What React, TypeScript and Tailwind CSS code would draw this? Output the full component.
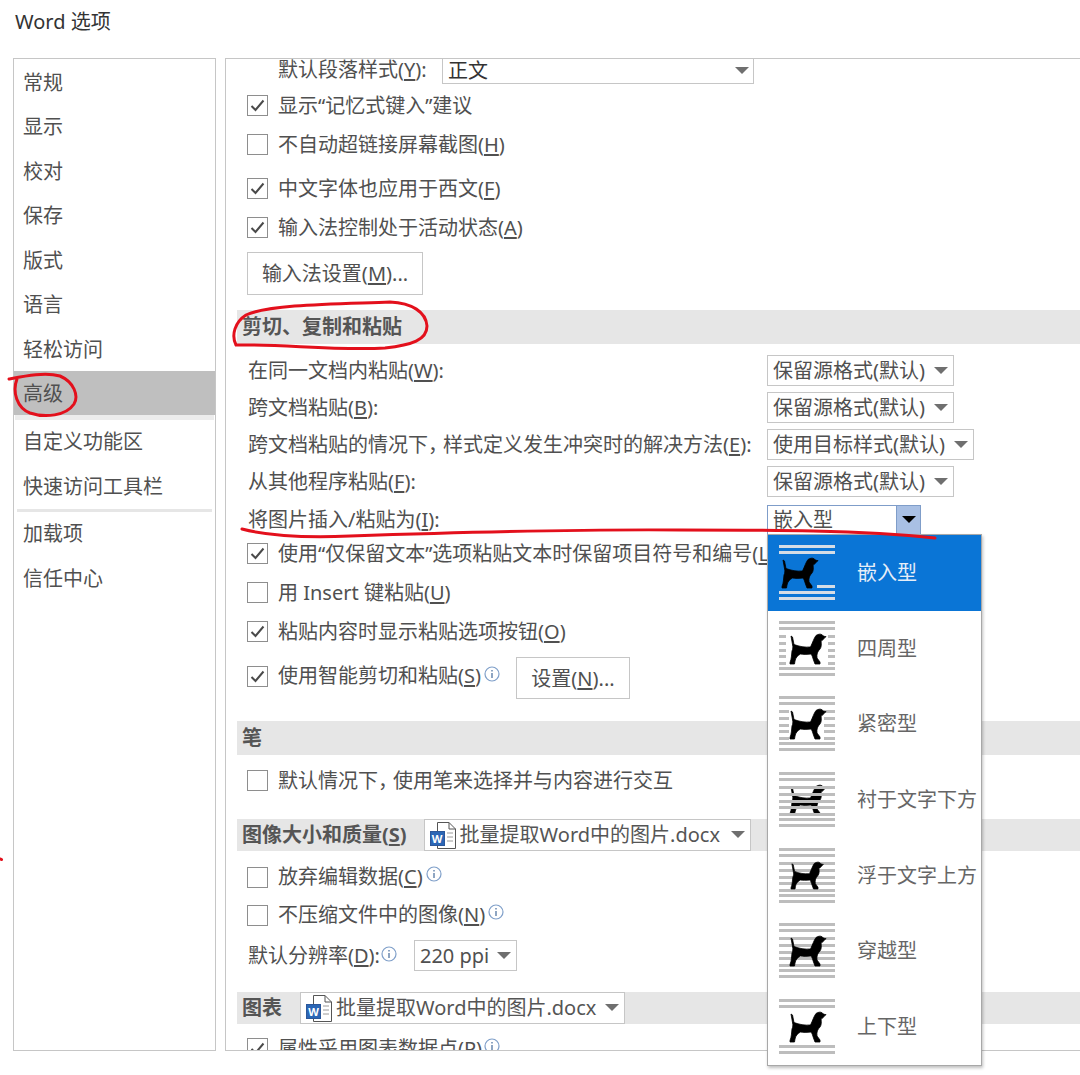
import type { ReactNode } from "react";

const navTop = ["常规", "显示", "校对", "保存", "版式", "语言", "轻松访问"];

// traced from the wrap-style thumbnails, 36x30 box
const DOG =
  "M1 2 L2.5 3 L4 10.5 C9 12.5 15 13.5 20.5 13 C22.5 9 24 4 26 1.5 C28 0 31 -0.3 32 0.8 C33 2 34.5 2.6 36 2.6 L34 4.6 C33 6 32 6.6 31 7 C31.5 10 31.5 13 30 15 C27.5 17.5 26.5 20 27 24 L30 28 L30 30 L25 30 L23.5 26 C22.5 23 22 21 21 20 C17 20.5 13 20.5 10.5 20 C7.5 21.5 5.5 24 5 27 L4.5 30 L0 30 L0 28.5 C1.5 25 1.5 21 2 17 C3 15 3 13 2.6 11 Z";

type Wrap = "inline" | "square" | "tight" | "behind" | "front" | "through" | "topbottom";

const menuItems: { wrap: Wrap; label: string }[] = [
  { wrap: "inline", label: "嵌入型" },
  { wrap: "square", label: "四周型" },
  { wrap: "tight", label: "紧密型" },
  { wrap: "behind", label: "衬于文字下方" },
  { wrap: "front", label: "浮于文字上方" },
  { wrap: "through", label: "穿越型" },
  { wrap: "topbottom", label: "上下型" },
];

function WrapIcon({ wrap, active }: { wrap: Wrap; active?: boolean }) {
  const line = active ? "#d5dde6" : "#bdbdbd";
  const mid = [14, 21, 28, 34, 41];
  const bars: [number, number, number][] = [
    [0, 0, 56],
    [0, 6, 56],
    [0, 46, 56],
    [0, 52, 56],
  ];
  if (wrap === "inline") bars.push([38, 40, 18]);
  if (wrap === "square") mid.forEach((y) => bars.push([0, y, 7], [49, y, 7]));
  if (wrap === "tight") mid.forEach((y) => bars.push([0, y, 10], [45, y, 11]));
  if (wrap === "behind" || wrap === "front" || wrap === "through") mid.forEach((y) => bars.push([0, y, 56]));

  const dogX = wrap === "inline" ? 3 : wrap === "front" ? 12 : 11;
  const dogY = wrap === "front" ? 14 : 13;
  const scale = wrap === "front" ? 0.9 : 1;
  const dog = <path d={DOG} transform={`translate(${dogX} ${dogY}) scale(${scale})`} fill="#000" stroke="#000" strokeWidth="0.8" />;
  const lines = bars.map(([x, y, w]) => <rect key={`${x}-${y}`} x={x} y={y} width={w} height="3" fill={line} />);

  return (
    <svg width="56" height="56" viewBox="0 0 56 56" className="shrink-0">
      {wrap !== "behind" && lines}
      {dog}
      {wrap === "behind" && lines}
    </svg>
  );
}

function Caret({ dark }: { dark?: boolean }) {
  return (
    <svg width="14" height="8" viewBox="0 0 14 8" className="shrink-0">
      <path d="M0 0 H14 L7 7 Z" fill={dark ? "#000" : "#6f6f6f"} />
    </svg>
  );
}

function Check({ checked }: { checked?: boolean }) {
  return (
    <span className="flex h-[21px] w-[21px] shrink-0 items-center justify-center border border-[#8e8e8e] bg-white">
      {checked && (
        <svg width="15" height="13" viewBox="0 0 15 13">
          <path d="M1.5 7 L5.5 11 L13.5 1.5" fill="none" stroke="#4a4a4a" strokeWidth="2" />
        </svg>
      )}
    </span>
  );
}

function Info() {
  return (
    <svg width="16" height="16" viewBox="0 0 16 16" className="shrink-0">
      <circle cx="8" cy="8" r="7" fill="none" stroke="#7f9fc9" strokeWidth="1.2" />
      <rect x="7.3" y="7" width="1.4" height="5" fill="#5f7fa9" />
      <rect x="7.3" y="4" width="1.4" height="1.5" fill="#5f7fa9" />
    </svg>
  );
}

function Comma() {
  return <span className="tracking-[-5px]">，</span>;
}

function CheckRow({ checked, height = "h-[39px]", className, children }: { checked?: boolean; height?: string; className?: string; children: ReactNode }) {
  return (
    <div className={`flex items-center gap-[10px] pl-[21px] ${height} ${className ?? ""}`}>
      <Check checked={checked} />
      <span className="whitespace-nowrap">{children}</span>
    </div>
  );
}

function Select({ height = "h-[31px]", className, children }: { height?: string; className?: string; children: ReactNode }) {
  return (
    <div className={`flex items-center justify-between border border-[#c6c6c6] bg-white pl-[5px] pr-[5px] ${height} ${className ?? ""}`}>
      <span className="flex items-center whitespace-nowrap">{children}</span>
      <Caret />
    </div>
  );
}

function PasteRow({ label, accel, value, width }: { label: ReactNode; accel: string; value: string; width: string }) {
  return (
    <div className="flex h-[37px] items-center pl-[22px]">
      <span className="w-[519px] shrink-0 whitespace-nowrap">
        {label}(<u className="underline-offset-2">{accel}</u>):
      </span>
      <Select className={width}>{value}</Select>
    </div>
  );
}

function Section({ className, children }: { className?: string; children: ReactNode }) {
  return (
    <div className={`ml-[11px] flex items-center bg-[#e6e6e6] pl-[5px] font-bold text-[#555] ${className ?? ""}`}>{children}</div>
  );
}

function DocIcon() {
  return (
    <span className="relative mr-[4px] h-[27px] w-[26px] shrink-0">
      <svg width="26" height="27" viewBox="0 0 26 27" className="absolute left-0 top-0">
        <path d="M7.5 .5 H19 L25.5 7 V26.5 H7.5 Z M19 .5 V7 H25.5" fill="#fff" stroke="#555" />
        <path d="M17 11 H23 M17 15 H23 M17 19 H23" stroke="#9a9a9a" />
      </svg>
      <span className="absolute bottom-[3px] left-0 flex h-[15px] w-[15px] items-center justify-center border border-[#2b579a] bg-[#2b66b5] text-[11px] font-bold leading-none text-white">
        W
      </span>
    </span>
  );
}

export default function App() {
  return (
    <div className="relative h-[1075px] w-[1080px] overflow-hidden bg-white font-['Noto_Sans','Noto_Sans_CJK_SC',sans-serif] text-[20px] leading-[26px] text-[#505050]">
      <div className="flex h-[58px] items-start pl-[15px] pt-[9px] text-[#333]">Word 选项</div>

      <div className="flex h-[993px] gap-[9px] pl-[13px]">
        {/* category list */}
        <nav className="w-[203px] shrink-0 border border-[#c6c6c6]">
          <div className="h-[1px]" />
          {navTop.map((item, i) => (
            <div key={item} className={`flex h-[44.5px] items-center pl-[9px] ${i === 0 ? "mt-[0.5px]" : ""}`}>
              {item}
            </div>
          ))}
          <div className="-mt-[1px] flex h-[44px] items-center bg-[#bfbfbf] pl-[9px] pt-[2px]">高级</div>
          <div className="mx-[1px] h-[5px] bg-[#ececec]" />
          <div className="flex h-[44.5px] items-center pl-[9px]">自定义功能区</div>
          <div className="flex h-[44.5px] items-center pl-[9px]">快速访问工具栏</div>
          <div className="mx-[3px] h-[3px] bg-[#e6e6e6]" />
          <div className="flex h-[44.5px] items-center pl-[9px]">加载项</div>
          <div className="flex h-[44.5px] items-center pl-[9px]">信任中心</div>
        </nav>

        {/* options pane */}
        <main className="min-w-0 flex-1 overflow-hidden border-y border-l border-[#c6c6c6]">
          <div className="flex h-[27px] items-start pl-[52px]">
            <span className="w-[164px] shrink-0 whitespace-nowrap leading-[22px]">
              默认段落样式(<u className="underline-offset-2">Y</u>):
            </span>
            <div className="-mt-[6px] flex h-[31px] w-[312px] items-center justify-between border border-[#c6c6c6] pl-[5px] pr-[4px] pt-[5px]">
              <span className="text-[#333]">正文</span>
              <Caret />
            </div>
          </div>
          <CheckRow checked>显示“记忆式键入”建议</CheckRow>
          <CheckRow>
            不自动超链接屏幕截图(<u className="underline-offset-2">H</u>)
          </CheckRow>
          <CheckRow checked className="mt-[5px]">
            中文字体也应用于西文(<u className="underline-offset-2">F</u>)
          </CheckRow>
          <CheckRow checked>
            输入法控制处于活动状态(<u className="underline-offset-2">A</u>)
          </CheckRow>
          <div className="ml-[21px] mt-[5px] flex h-[43px] w-[176px] items-center justify-center border border-[#c6c6c6]">
            输入法设置(<u className="underline-offset-2">M</u>)...
          </div>

          <Section className="mt-[15px] h-[34px]">剪切、复制和粘贴</Section>
          <div className="h-[8px]" />
          <PasteRow label="在同一文档内粘贴" accel="W" value="保留源格式(默认)" width="w-[187px]" />
          <PasteRow label="跨文档粘贴" accel="B" value="保留源格式(默认)" width="w-[187px]" />
          <PasteRow
            label={
              <>
                跨文档粘贴的情况下
                <Comma />
                样式定义发生冲突时的解决方法
              </>
            }
            accel="E"
            value="使用目标样式(默认)"
            width="w-[207px]"
          />
          <PasteRow label="从其他程序粘贴" accel="F" value="保留源格式(默认)" width="w-[187px]" />
          <div className="flex h-[34px] items-center pl-[22px] pt-[5px]">
            <span className="w-[519px] shrink-0 whitespace-nowrap">
              将图片插入/粘贴为(<u className="underline-offset-2">I</u>):
            </span>
            <div className="flex h-[30px] w-[154px] items-center border border-[#7f9dc9]">
              <span className="flex-1 pl-[5px]">嵌入型</span>
              <span className="flex h-full w-[24px] items-center justify-center border-l border-[#7f9dc9] bg-[#a9c0e4]">
                <Caret dark />
              </span>
            </div>
          </div>

          <CheckRow checked>
            使用“仅保留文本”选项粘贴文本时保留项目符号和编号(<u className="underline-offset-2">L</u>)
          </CheckRow>
          <CheckRow>
            用 Insert 键粘贴(<u className="underline-offset-2">U</u>)
          </CheckRow>
          <CheckRow checked>
            粘贴内容时显示粘贴选项按钮(<u className="underline-offset-2">O</u>)
          </CheckRow>
          <div className="mt-[6px] flex h-[42px] items-center pl-[21px]">
            <div className="-mt-[4px] flex items-center gap-[10px]">
              <Check checked />
              <span className="whitespace-nowrap">
                使用智能剪切和粘贴(<u className="underline-offset-2">S</u>)
              </span>
            </div>
            <span className="-mt-[8px] ml-[3px]">
              <Info />
            </span>
            <div className="ml-[16px] flex h-[42px] w-[114px] items-center justify-center border border-[#c6c6c6] pt-[2px]">
              设置(<u className="underline-offset-2">N</u>)...
            </div>
          </div>

          <Section className="mt-[22px] h-[34px]">笔</Section>
          <CheckRow className="mt-[6px]">
            默认情况下
            <Comma />
            使用笔来选择并与内容进行交互
          </CheckRow>

          <Section className="mt-[19px] h-[32px]">
            <span className="whitespace-nowrap">
              图像大小和质量(<u className="underline-offset-2">S</u>)
            </span>
            <Select height="h-[32px]" className="ml-[17px] w-[327px] font-normal">
              <DocIcon />
              批量提取Word中的图片.docx
            </Select>
          </Section>
          <CheckRow height="h-[38px]" className="mt-[7px]">
            <span className="flex items-center gap-[3px]">
              <span>
                放弃编辑数据(<u className="underline-offset-2">C</u>)
              </span>
              <span className="-mt-[6px]">
                <Info />
              </span>
            </span>
          </CheckRow>
          <CheckRow height="h-[38px]">
            <span className="flex items-center gap-[3px]">
              <span>
                不压缩文件中的图像(<u className="underline-offset-2">N</u>)
              </span>
              <span className="-mt-[6px]">
                <Info />
              </span>
            </span>
          </CheckRow>
          <div className="mt-[6px] flex h-[31px] items-center pl-[22px]">
            <span className="whitespace-nowrap">
              默认分辨率(<u className="underline-offset-2">D</u>):
            </span>
            <span className="-mt-[4px] ml-[1px]">
              <Info />
            </span>
            <Select className="ml-[17px] w-[103px]">220 ppi</Select>
          </div>

          <Section className="mt-[21px] h-[32px]">
            图表
            <Select height="h-[32px]" className="ml-[18px] w-[325px] font-normal">
              <DocIcon />
              批量提取Word中的图片.docx
            </Select>
          </Section>
          <div className="mt-[5px] flex h-[39px] items-center gap-[10px] pl-[21px]">
            <Check checked />
            <span className="whitespace-nowrap">属性采用图表数据点(<u className="underline-offset-2">P</u>)</span>
            <span className="-ml-[8px] -mt-[6px]">
              <Info />
            </span>
          </div>
        </main>
      </div>

      {/* open wrap-style dropdown */}
      <div className="absolute left-[767px] top-[534px] w-[215px] border border-[#a8a8a8] bg-white shadow-[1px_2px_3px_rgba(0,0,0,0.25)]">
        {menuItems.map((item, i) => (
          <div
            key={item.wrap}
            className={`flex h-[75.7px] items-center pl-[11px] ${i === 0 ? "bg-[#0a75d6] text-[#e6eef8]" : "text-[#666]"}`}
          >
            <WrapIcon wrap={item.wrap} active={i === 0} />
            <span className="ml-[22px] whitespace-nowrap">{item.label}</span>
          </div>
        ))}
      </div>

      {/* hand-drawn red annotations */}
      <svg width="1080" height="1075" viewBox="0 0 1080 1075" className="pointer-events-none absolute left-0 top-0">
        <g fill="none" stroke="#e3101c" strokeWidth="3" strokeLinecap="round">
          <path d="M236 345 C231 335 235 322 246 315 C270 304 340 304 390 302 C412 303 426 312 427 326 C427 340 412 345 385 348 C340 351 280 344 236 345 Z" />
          <path d="M9 379 C25 376 45 372 60 376 C74 382 79 396 74 404 C66 416 45 418 30 413 C17 408 12 392 17 379" />
          <path d="M242 529 C265 535 300 538 350 536 C440 533 560 529 680 530 C770 530 860 530 935 538" />
          <path d="M0.5 859 L1.5 859.5" />
        </g>
      </svg>
    </div>
  );
}
